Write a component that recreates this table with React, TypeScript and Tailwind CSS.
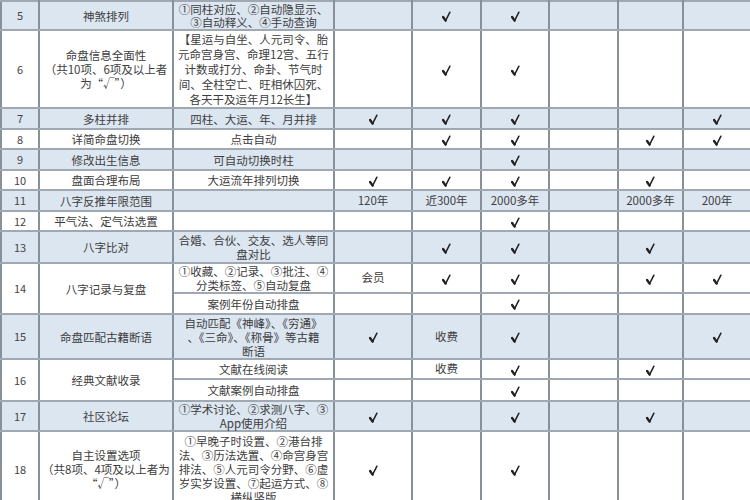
type Sub = { desc: string[]; cells: string[]; h: string };
type Row = { no: string; name: string[]; blue?: boolean; subs: Sub[] };

const V = "v";

const rows: Row[] = [
  {
    no: "5",
    name: ["神煞排列"],
    blue: true,
    subs: [
      {
        desc: ["①同柱对应、②自动隐显示、", "③自动释义、④手动查询"],
        cells: ["", V, V, "", "", ""],
        h: "h-[29px]",
      },
    ],
  },
  {
    no: "6",
    name: ["命盘信息全面性", "（共10项、6项及以上者", "为“√”）"],
    subs: [
      {
        desc: [
          "【星运与自坐、人元司令、胎",
          "元命宫身宫、命理12宫、五行",
          "计数或打分、命卦、节气时",
          "间、全柱空亡、旺相休囚死、",
          "各天干及运年月12长生】",
        ],
        cells: ["", V, V, "", "", ""],
        h: "h-[78px]",
      },
    ],
  },
  {
    no: "7",
    name: ["多柱并排"],
    blue: true,
    subs: [{ desc: ["四柱、大运、年、月并排"], cells: [V, V, V, "", "", V], h: "h-[21px]" }],
  },
  {
    no: "8",
    name: ["详简命盘切换"],
    subs: [{ desc: ["点击自动"], cells: ["", V, V, "", V, V], h: "h-[20px]" }],
  },
  {
    no: "9",
    name: ["修改出生信息"],
    blue: true,
    subs: [{ desc: ["可自动切换时柱"], cells: ["", "", V, "", "", ""], h: "h-[21px]" }],
  },
  {
    no: "10",
    name: ["盘面合理布局"],
    subs: [{ desc: ["大运流年排列切换"], cells: [V, V, V, "", V, ""], h: "h-[20px]" }],
  },
  {
    no: "11",
    name: ["八字反推年限范围"],
    blue: true,
    subs: [
      {
        desc: [""],
        cells: ["120年", "近300年", "2000多年", "", "2000多年", "200年"],
        h: "h-[21px]",
      },
    ],
  },
  {
    no: "12",
    name: ["平气法、定气法选置"],
    subs: [{ desc: [""], cells: ["", "", V, "", "", ""], h: "h-[20px]" }],
  },
  {
    no: "13",
    name: ["八字比对"],
    blue: true,
    subs: [
      {
        desc: ["合婚、合伙、交友、选人等同", "盘对比"],
        cells: ["", V, V, "", V, ""],
        h: "h-[32px]",
      },
    ],
  },
  {
    no: "14",
    name: ["八字记录与复盘"],
    subs: [
      {
        desc: ["①收藏、②记录、③批注、④", "分类标签、⑤自动复盘"],
        cells: ["会员", V, V, "", V, V],
        h: "h-[30px]",
      },
      { desc: ["案例年份自动排盘"], cells: ["", "", V, "", "", ""], h: "h-[21px]" },
    ],
  },
  {
    no: "15",
    name: ["命盘匹配古籍断语"],
    blue: true,
    subs: [
      {
        desc: ["自动匹配《神峰》、《穷通》", "、《三命》、《称骨》等古籍", "断语"],
        cells: [V, "收费", V, "", "", V],
        h: "h-[45px]",
      },
    ],
  },
  {
    no: "16",
    name: ["经典文献收录"],
    subs: [
      { desc: ["文献在线阅读"], cells: ["", "收费", V, "", V, ""], h: "h-[20px]" },
      { desc: ["文献案例自动排盘"], cells: ["", "", V, "", "", ""], h: "h-[22px]" },
    ],
  },
  {
    no: "17",
    name: ["社区论坛"],
    blue: true,
    subs: [
      {
        desc: ["①学术讨论、②求测八字、③", "App使用介绍"],
        cells: [V, "", V, "", V, ""],
        h: "h-[30px]",
      },
    ],
  },
  {
    no: "18",
    name: ["自主设置选项", "（共8项、4项及以上者为", "“√”）"],
    subs: [
      {
        desc: [
          "①早晚子时设置、②港台排",
          "法、③历法选置、④命宫身宫",
          "排法、⑤人元司令分野、⑥虚",
          "岁实岁设置、⑦起运方式、⑧",
          "横纵竖版",
        ],
        cells: [V, "", V, "", "", ""],
        h: "h-[76px]",
      },
    ],
  },
];

const td =
  "p-0 text-center align-middle border-x-2 border-x-[#88919a] border-y-2 border-y-[#a0a9b2]";

function Lines({ lines, lh }: { lines: string[]; lh: string }) {
  return (
    <div className={lh}>
      {lines.map((l, i) => (
        <div key={i} className="whitespace-nowrap">
          {l}
        </div>
      ))}
    </div>
  );
}

function Check() {
  return (
    <svg viewBox="0 0 10 12" className="inline-block w-[9px] h-[11px] align-middle">
      <path
        d="M1.2 6.6 L4 10.6 L8.8 1.2"
        fill="none"
        stroke="#222"
        strokeWidth="1.7"
        strokeLinecap="round"
        strokeLinejoin="round"
      />
      <path d="M1.2 6.6 L4 10.6" fill="none" stroke="#222" strokeWidth="2.6" strokeLinecap="round" />
    </svg>
  );
}

function Cell({ v }: { v: string }) {
  if (v === V) return <Check />;
  return <span>{v}</span>;
}

export default function App() {
  return (
    <div className="w-[750px] h-[500px] overflow-hidden bg-white font-['Noto_Sans_CJK_SC','Noto_Sans',sans-serif] text-[11.5px] text-[#3d3d3d]">
      <table className="w-[750px] table-fixed border-collapse">
        <colgroup>
          <col className="w-[38px]" />
          <col className="w-[134px]" />
          <col className="w-[161px]" />
          <col className="w-[78px]" />
          <col className="w-[69px]" />
          <col className="w-[68px]" />
          <col className="w-[69px]" />
          <col className="w-[65px]" />
          <col className="w-[68px]" />
        </colgroup>
        <tbody>
          {rows.map((r) =>
            r.subs.map((s, i) => (
              <tr key={r.no + "-" + i} className={`${s.h} ${r.blue ? "bg-[#dce6f1]" : "bg-white"}`}>
                {i === 0 && (
                  <td rowSpan={r.subs.length} className={`${td} text-[11px] text-[#444]`}>
                    {r.no}
                  </td>
                )}
                {i === 0 && (
                  <td rowSpan={r.subs.length} className={td}>
                    <Lines lines={r.name} lh="leading-[14px]" />
                  </td>
                )}
                <td className={td}>
                  <Lines
                    lines={s.desc}
                    lh={r.no === "6" ? "leading-[15px]" : r.no === "5" ? "leading-[13px]" : "leading-[14px]"}
                  />
                </td>
                {s.cells.map((c, j) => (
                  <td key={j} className={td}>
                    <Cell v={c} />
                  </td>
                ))}
              </tr>
            ))
          )}
        </tbody>
      </table>
    </div>
  );
}
